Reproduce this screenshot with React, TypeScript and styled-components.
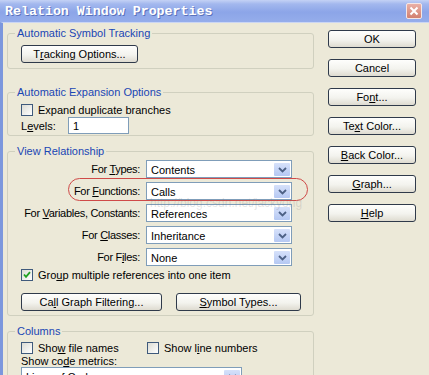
import React from 'react';
import styled, { createGlobalStyle } from 'styled-components';

const Global = createGlobalStyle`
  html, body { margin: 0; padding: 0; background: #ece9d8; }
  body { font-family: "Liberation Sans", Arial, sans-serif; font-size: 11px; color: #000; }
`;

const Window = styled.div`
  width: 429px;
  height: 375px;
  overflow: hidden;
  position: relative;
  display: flex;
  flex-direction: column;
  background: #ece9d8;
`;

const TitleBar = styled.div`
  height: 22px;
  flex: none;
  display: flex;
  align-items: center;
  padding: 0 7px 0 5px;
  background: linear-gradient(#c4d2f5 0%, #a3b8ee 18%, #8ca5e8 55%, #95adeb 100%);
`;

const TitleText = styled.span`
  flex: 1;
  font-family: "Liberation Mono", "DejaVu Sans Mono", monospace;
  font-weight: bold;
  font-size: 13.3px;
  color: #fff;
  text-shadow: 1px 1px 0 #5a72bc;
`;

const CloseBtn = styled.div`
  width: 16px;
  height: 16px;
  box-sizing: border-box;
  border-radius: 2px;
  border: 1px solid #f3e6e6;
  background: linear-gradient(#eab0a6, #d2806f);
  display: flex;
  align-items: center;
  justify-content: center;
`;

const Frame = styled.div`
  flex: 1;
  display: flex;
  align-items: flex-start;
  gap: 14px;
  border-left: 3px solid #7c97dd;
  border-top: 1px solid #cbd6f3;
  padding: 4px 0 0 4px;
`;

const LeftCol = styled.div`
  width: 307px;
  flex: none;
  display: flex;
  flex-direction: column;
`;

const RightCol = styled.div`
  margin-top: 3px;
  display: flex;
  flex-direction: column;
  gap: 11px;
`;

const Group = styled.fieldset<{ $mt: number; $pb: number }>`
  box-sizing: border-box;
  width: 100%;
  min-width: 0;
  margin: ${p => p.$mt}px 0 0 0;
  padding: 0 11px ${p => p.$pb}px 13px;
  border: 1px solid #d0d0bf;
  border-radius: 3px;
`;

const Legend = styled.legend`
  padding: 0 2px;
  margin-left: -6px;
  line-height: 13px;
  font-size: 11px;
  color: #1a46b4;
`;

const Btn = styled.button<{ $w?: number; $mt?: number }>`
  box-sizing: border-box;
  height: 18px;
  width: ${p => p.$w ?? 88}px;
  margin: ${p => p.$mt ?? 0}px 0 0 0;
  padding: 0;
  border: 1px solid #2f3a4a;
  border-radius: 3px;
  background: linear-gradient(#fefefc 0%, #f3f3ee 55%, #dedbd0 100%);
  font-family: "Liberation Sans", Arial, sans-serif;
  font-size: 11px;
  color: #000;
  display: flex;
  align-items: center;
  justify-content: center;
  flex: none;
`;

const CheckRow = styled.div<{ $mt: number }>`
  display: flex;
  align-items: center;
  height: 12px;
  margin-top: ${p => p.$mt}px;
`;

const CheckItem = styled.label<{ $w?: number }>`
  display: flex;
  align-items: center;
  gap: 5px;
  width: ${p => (p.$w ? `${p.$w}px` : 'auto')};
  flex: none;
  white-space: nowrap;
`;

const Box = styled.span`
  box-sizing: border-box;
  width: 12px;
  height: 12px;
  border: 1px solid #3f5a7c;
  background: linear-gradient(135deg, #dcdcd4, #fff);
  display: flex;
  align-items: center;
  justify-content: center;
`;

const LevelsRow = styled.div`
  display: flex;
  align-items: center;
  margin-top: 1px;
  height: 17px;
`;

const LevelsLabel = styled.span`
  width: 47px;
`;

const TextInput = styled.div`
  box-sizing: border-box;
  width: 61px;
  height: 17px;
  border: 1px solid #7f9db9;
  background: #fff;
  padding-left: 4px;
  display: flex;
  align-items: center;
`;

const SelectGrid = styled.div`
  position: relative;
  margin-top: 2px;
  margin-right: 10px;
  display: grid;
  grid-template-columns: minmax(0, 1fr) 146px;
  column-gap: 6px;
  row-gap: 4px;
  align-items: center;
`;

const RowLabel = styled.span`
  justify-self: end;
  text-align: right;
  white-space: nowrap;
  letter-spacing: -0.3px;
`;

const Select = styled.div<{ $w?: number }>`
  box-sizing: border-box;
  height: 18px;
  width: ${p => (p.$w ? `${p.$w}px` : 'auto')};
  border: 1px solid #7f9db9;
  background: #fff;
  display: flex;
  align-items: center;
  padding: 2px 1px 1px 4px;
`;

const SelectText = styled.span`
  flex: 1;
`;

const Arrow = styled.span`
  width: 16px;
  height: 13px;
  border-radius: 1px;
  background: linear-gradient(#d6e1fa, #b5c8f3);
  display: flex;
  align-items: center;
  justify-content: center;
`;

const Ellipse = styled.div`
  position: absolute;
  left: 47px;
  top: 18px;
  width: 240px;
  height: 23px;
  box-sizing: border-box;
  border: 1.5px solid #cf4a48;
  border-radius: 12px;
  pointer-events: none;
`;

const ButtonRow = styled.div`
  display: flex;
  gap: 14px;
  margin-top: 12px;
`;

const PlainLine = styled.div`
  margin-top: 1px;
  line-height: 12px;
`;

const Watermark = styled.div`
  position: absolute;
  left: 150px;
  top: 196px;
  font-size: 12px;
  color: rgba(120, 120, 120, 0.2);
  white-space: nowrap;
  pointer-events: none;
`;

const Chevron = () => (
  <svg width="9" height="6" viewBox="0 0 9 6">
    <path d="M1 1 L4.5 4.5 L8 1" fill="none" stroke="#4d6185" strokeWidth="1.8" />
  </svg>
);

const Drop: React.FC<{ text: string; w?: number }> = ({ text, w }) => (
  <Select $w={w}>
    <SelectText>{text}</SelectText>
    <Arrow>
      <Chevron />
    </Arrow>
  </Select>
);

const Check: React.FC<{ checked?: boolean; w?: number; children: React.ReactNode }> = ({ checked, w, children }) => (
  <CheckItem $w={w}>
    <Box>
      {checked && (
        <svg width="8" height="8" viewBox="0 0 8 8">
          <path d="M1 3.5 L3 5.8 L7 1.2" fill="none" stroke="#21a121" strokeWidth="1.8" />
        </svg>
      )}
    </Box>
    <span>{children}</span>
  </CheckItem>
);

export default function App() {
  return (
    <>
      <Global />
      <Window>
        <TitleBar>
          <TitleText>Relation Window Properties</TitleText>
          <CloseBtn>
            <svg width="10" height="10" viewBox="0 0 10 10">
              <path d="M1.5 1.5 L8.5 8.5 M8.5 1.5 L1.5 8.5" stroke="#fff" strokeWidth="2" />
            </svg>
          </CloseBtn>
        </TitleBar>
        <Frame>
          <LeftCol>
            <Group $mt={0} $pb={5}>
              <Legend>Automatic Symbol Tracking</Legend>
              <Btn $w={117} $mt={5}>
                T<u>r</u>acking Options...
              </Btn>
            </Group>

            <Group $mt={17} $pb={1}>
              <Legend>Automatic Expansion Options</Legend>
              <CheckRow $mt={5}>
                <Check>Expand duplicate branches</Check>
              </CheckRow>
              <LevelsRow>
                <LevelsLabel>
                  L<u>e</u>vels:
                </LevelsLabel>
                <TextInput>1</TextInput>
              </LevelsRow>
            </Group>

            <Group $mt={9} $pb={4}>
              <Legend>View Relationship</Legend>
              <SelectGrid>
                <RowLabel>
                  For <u>T</u>ypes:
                </RowLabel>
                <Drop text="Contents" />
                <RowLabel>
                  For <u>F</u>unctions:
                </RowLabel>
                <Drop text="Calls" />
                <RowLabel>
                  For <u>V</u>ariables, Constants:
                </RowLabel>
                <Drop text="References" />
                <RowLabel>
                  For <u>C</u>lasses:
                </RowLabel>
                <Drop text="Inheritance" />
                <RowLabel>
                  For F<u>i</u>les:
                </RowLabel>
                <Drop text="None" />
                <Ellipse />
              </SelectGrid>
              <CheckRow $mt={3}>
                <Check checked>
                  Gro<u>u</u>p multiple references into one item
                </Check>
              </CheckRow>
              <ButtonRow>
                <Btn $w={141}>
                  Ca<u>l</u>l Graph Filtering...
                </Btn>
                <Btn $w={125}>
                  <u>S</u>ymbol Types...
                </Btn>
              </ButtonRow>
            </Group>

            <Group $mt={9} $pb={6}>
              <Legend>Columns</Legend>
              <CheckRow $mt={4}>
                <Check w={126}>
                  Sho<u>w</u> file names
                </Check>
                <Check>
                  Show l<u>i</u>ne numbers
                </Check>
              </CheckRow>
              <PlainLine>
                Show co<u>d</u>e metrics:
              </PlainLine>
              <Drop text="Lines of Code" w={221} />
            </Group>
          </LeftCol>

          <RightCol>
            <Btn>OK</Btn>
            <Btn>Cancel</Btn>
            <Btn>
              Fo<u>n</u>t...
            </Btn>
            <Btn>
              Te<u>x</u>t Color...
            </Btn>
            <Btn>
              <u>B</u>ack Color...
            </Btn>
            <Btn>
              <u>G</u>raph...
            </Btn>
            <Btn>
              <u>H</u>elp
            </Btn>
          </RightCol>
        </Frame>
        <Watermark>http://blog.csdn.net/jackyong</Watermark>
      </Window>
    </>
  );
}
